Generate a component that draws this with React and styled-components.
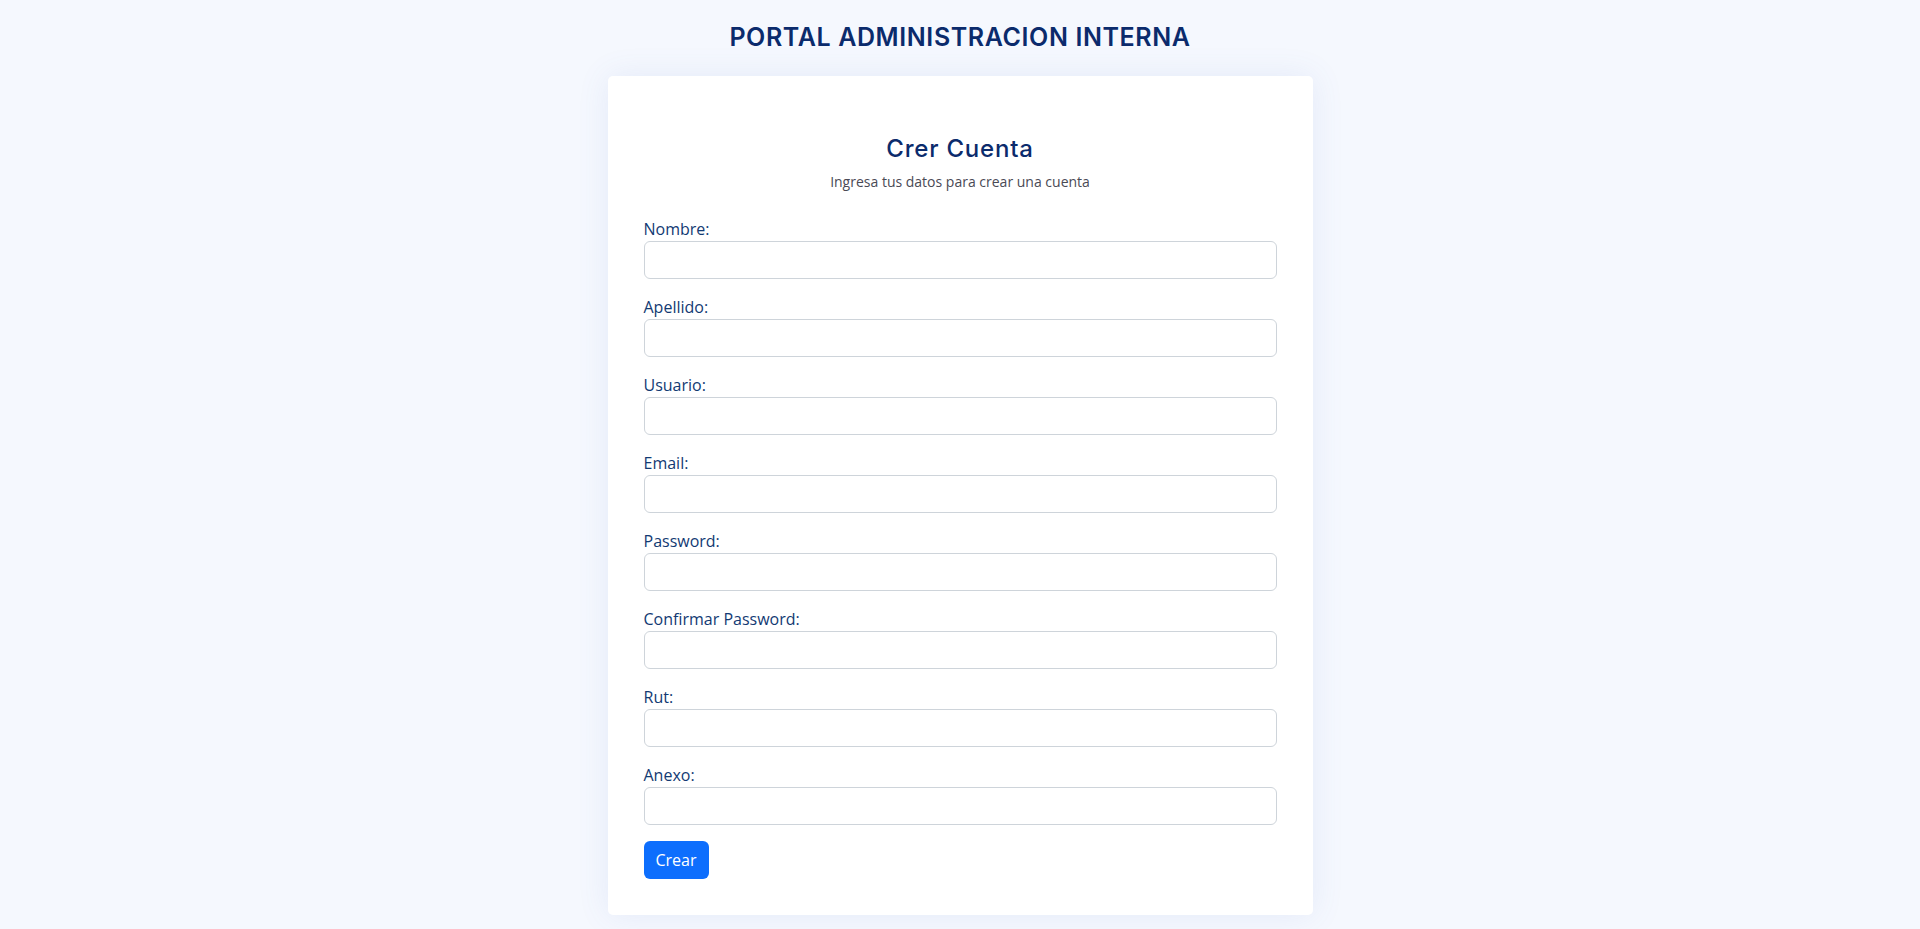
import React from "react";
import styled, { createGlobalStyle } from "styled-components";

const GlobalStyle = createGlobalStyle`
  * { box-sizing: border-box; }
  body {
    margin: 0;
    background-color: #f5f8fe;
    font-family: "Open Sans", "Noto Sans", sans-serif;
  }
`;

const fields = [
  { id: "nombre", label: "Nombre:", type: "text" },
  { id: "apellido", label: "Apellido:", type: "text" },
  { id: "usuario", label: "Usuario:", type: "text" },
  { id: "email", label: "Email:", type: "email" },
  { id: "password", label: "Password:", type: "password" },
  { id: "confirm", label: "Confirmar Password:", type: "password" },
  { id: "rut", label: "Rut:", type: "text" },
  { id: "anexo", label: "Anexo:", type: "text" },
];

export default function App() {
  return (
    <>
      <GlobalStyle />
      <Page>
        <PortalTitle>PORTAL ADMINISTRACION INTERNA</PortalTitle>
        <Card>
          <CardTitle>Crer Cuenta</CardTitle>
          <Subtitle>Ingresa tus datos para crear una cuenta</Subtitle>
          <form onSubmit={(e) => e.preventDefault()}>
            {fields.map((f) => (
              <Group key={f.id}>
                <Label htmlFor={f.id}>{f.label}</Label>
                <Input id={f.id} type={f.type} />
              </Group>
            ))}
            <SubmitButton type="submit">Crear</SubmitButton>
          </form>
        </Card>
      </Page>
    </>
  );
}

const Page = styled.div`
  display: flex;
  flex-direction: column;
  align-items: center;
  padding-top: 22px;
  min-height: 100vh;
`;

const PortalTitle = styled.h1`
  margin: 0 0 23px;
  font-family: "Inter", "Lato", sans-serif;
  font-weight: 600;
  font-size: 25px;
  line-height: 31px;
  color: #0b2b6c;
  letter-spacing: 0.6px;
`;

const Card = styled.div`
  width: 705px;
  background: #ffffff;
  border-radius: 5px;
  padding: 36px;
  box-shadow: 0 0 32px rgba(80, 110, 200, 0.1);
`;

const CardTitle = styled.h2`
  margin: 22px 0 8px;
  text-align: center;
  font-family: "Inter", "Lato", sans-serif;
  font-weight: 500;
  font-size: 24px;
  line-height: 29px;
  letter-spacing: 0.8px;
  color: #0b2b6c;
`;

const Subtitle = styled.p`
  margin: 0 0 25px;
  text-align: center;
  font-size: 14px;
  line-height: 21px;
  color: #4a4a55;
`;

const Group = styled.div`
  margin-bottom: 16px;
`;

const Label = styled.label`
  display: block;
  font-size: 16px;
  line-height: 24px;
  color: #123a73;
`;

const Input = styled.input`
  display: block;
  width: 100%;
  height: 38px;
  padding: 6px 12px;
  font-size: 16px;
  font-family: inherit;
  border: 1px solid #ced4da;
  border-radius: 6px;
  background: #fff;
  outline: none;
`;

const SubmitButton = styled.button`
  height: 38px;
  padding: 0 12px;
  border: none;
  border-radius: 6px;
  background-color: #0d6efd;
  color: #ffffff;
  font-family: inherit;
  font-size: 16px;
  cursor: pointer;
`;
